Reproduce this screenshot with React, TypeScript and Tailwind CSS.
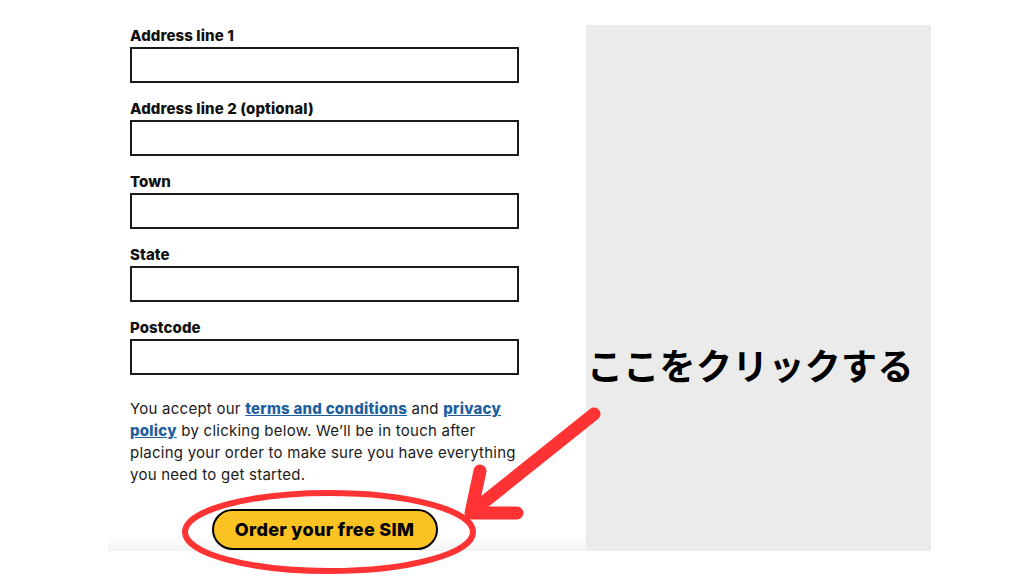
import React from "react";

const fields = ["Address line 1", "Address line 2 (optional)", "Town", "State", "Postcode"];

export default function App() {
  return (
    <div className="relative w-[1024px] h-[576px] overflow-hidden bg-white font-['Inter',sans-serif] text-[#1a1a1a]">
      <div className="flex pt-[25px] pl-[108px]">
        <div className="w-[478px] h-[526px] pl-[22px] bg-linear-to-b from-white from-[97%] to-[#f3f3f3]">
          <div className="w-[389px] flex flex-col">
            {fields.map((f, i) => (
              <div key={f} className={i < fields.length - 1 ? "mb-[15px]" : ""}>
                <div className="text-[15px] leading-[20px] font-extrabold tracking-[0.1px] text-[#111] translate-y-[1px]">{f}</div>
                <div className="mt-[2px] h-[36px] w-full border-2 border-[#1a1a1a] bg-white" />
              </div>
            ))}
            <p className="mt-[23px] text-[15px] leading-[22px] tracking-[0.25px] text-[#1a1a1a]">
              You accept our{" "}
              <a className="font-extrabold text-[#1d5fa0] underline">terms and conditions</a> and{" "}
              <a className="font-extrabold text-[#1d5fa0] underline">privacy</a>
              <br />
              <a className="font-extrabold text-[#1d5fa0] underline">policy</a> by clicking below. We’ll be in touch after
              <br />
              placing your order to make sure you have everything
              <br />
              you need to get started.
            </p>
            <div className="mt-[23px] flex justify-center">
              <button className="h-[41px] w-[226px] rounded-full border-2 border-black bg-[#fbc224] text-[18px] font-extrabold tracking-[0.3px] text-black">
                Order your free SIM
              </button>
            </div>
          </div>
        </div>
        <div className="w-[345px] h-[526px] bg-[#ebebeb]" />
      </div>

      <div className="absolute left-[587px] top-[346px] text-[36px] leading-[36px] tracking-[0.3px] font-bold text-black font-['Noto_Sans_CJK_JP',sans-serif] whitespace-nowrap">
        ここをクリックする
      </div>

      <svg className="absolute inset-0 pointer-events-none" width="1024" height="576" viewBox="0 0 1024 576">
        <ellipse cx="329" cy="532" rx="144" ry="39" fill="none" stroke="#ff3333" strokeWidth="6" />
        <line x1="594" y1="414" x2="474" y2="510" stroke="#ff3333" strokeWidth="13" strokeLinecap="round" />
        <polyline points="480,471 471,513 517,513" fill="none" stroke="#ff3333" strokeWidth="13" strokeLinecap="round" strokeLinejoin="round" />
      </svg>
    </div>
  );
}
